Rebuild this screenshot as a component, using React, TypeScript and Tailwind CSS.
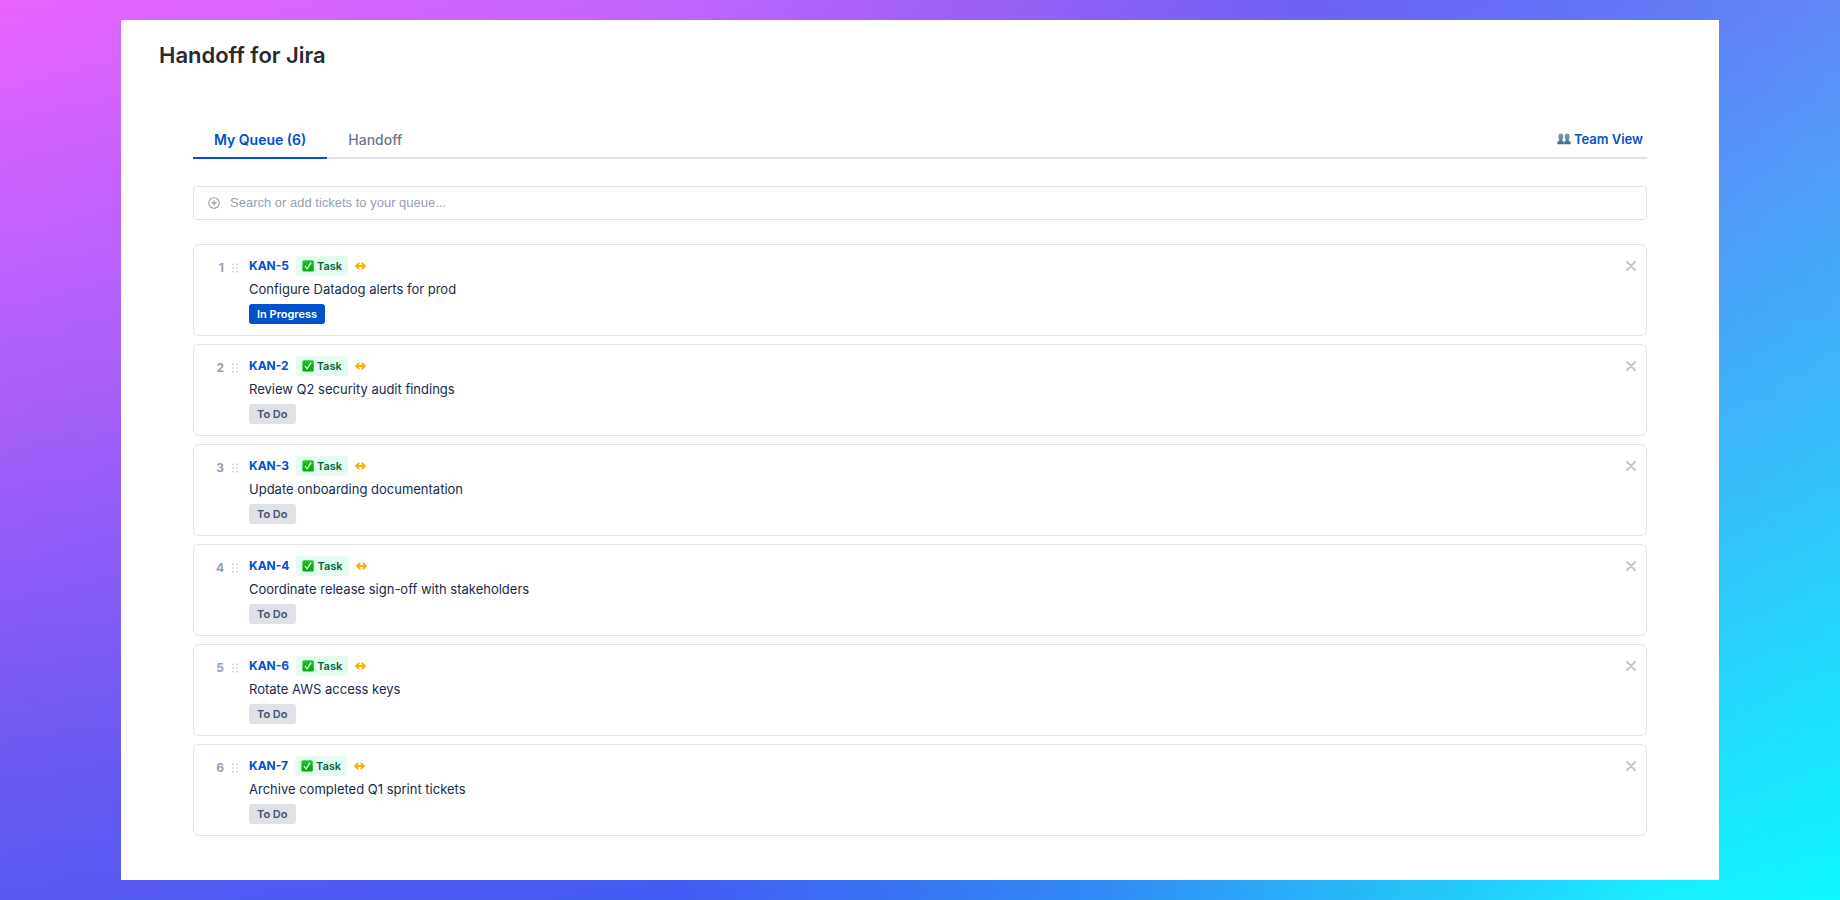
import { useState } from 'react';

type Status = 'In Progress' | 'To Do';

interface Ticket {
  id: string;
  title: string;
  status: Status;
}

const tickets: Ticket[] = [
  { id: 'KAN-5', title: 'Configure Datadog alerts for prod', status: 'In Progress' },
  { id: 'KAN-2', title: 'Review Q2 security audit findings', status: 'To Do' },
  { id: 'KAN-3', title: 'Update onboarding documentation', status: 'To Do' },
  { id: 'KAN-4', title: 'Coordinate release sign-off with stakeholders', status: 'To Do' },
  { id: 'KAN-6', title: 'Rotate AWS access keys', status: 'To Do' },
  { id: 'KAN-7', title: 'Archive completed Q1 sprint tickets', status: 'To Do' },
];

const statusStyles: Record<Status, string> = {
  'In Progress': 'bg-[#0052cc] text-white',
  'To Do': 'bg-[#dfe1e6] text-[#42526e]',
};

function TeamIcon() {
  return (
    <svg width="14" height="12" viewBox="0 0 14 12" aria-hidden="true">
      <defs>
        <linearGradient id="bust" x1="0" y1="0" x2="0" y2="1">
          <stop offset="0" stopColor="#86a3b3" />
          <stop offset="1" stopColor="#436a8c" />
        </linearGradient>
      </defs>
      <g fill="url(#bust)">
        <path d="M3.8.5C5.5.5 6.4 1.8 6.3 3.6 6.2 5 5.8 5.9 5.2 6.5c-.1.9.1 1.3 1 1.7.5.3.6.8.6 1.4v1.6H.3V9.7c0-.8.2-1.2.8-1.5 1-.4 1.3-.8 1.2-1.7C1.7 5.9 1.4 5 1.3 3.6 1.2 1.8 2.1.5 3.8.5Z" />
        <path d="M10.2.5c1.7 0 2.6 1.3 2.5 3.1-.1 1.4-.4 2.3-1 2.9-.1.9.2 1.3 1.2 1.7.6.3.8.7.8 1.5v1.5H7.2V9.6c0-.6.1-1.1.6-1.4.9-.4 1.1-.8 1-1.7-.6-.6-1-1.5-1.1-2.9C7.6 1.8 8.5.5 10.2.5Z" />
      </g>
    </svg>
  );
}

function CheckIcon() {
  return (
    <svg width="12" height="12" viewBox="0 0 12 12" aria-hidden="true">
      <defs>
        <linearGradient id="check" x1="0" y1="0" x2="0" y2="1">
          <stop offset="0" stopColor="#2cc13c" />
          <stop offset=".5" stopColor="#06b80c" />
          <stop offset="1" stopColor="#04a80a" />
        </linearGradient>
      </defs>
      <rect x=".4" y=".2" width="11.4" height="11.4" rx="1.6" fill="url(#check)" />
      <path d="M3.2 6.4 5.1 9 8.9 2.9" fill="none" stroke="#fff" strokeWidth="1.2" strokeLinecap="round" strokeLinejoin="round" />
    </svg>
  );
}

function HandoffIcon() {
  return (
    <svg width="12" height="10" viewBox="0 0 12 10" fill="none" stroke="#ffab00" strokeWidth="1.8" strokeLinecap="round" strokeLinejoin="round" role="img" aria-label="Handoff">
      <path d="M2 5h7M3.7 2.4 1.1 5l2.6 2.600M7.300 2.400 9.900 5 7.300 7.600" />
    </svg>
  );
}

function GripIcon() {
  return (
    <svg width="6" height="10" viewBox="0 0 6 10" fill="#b3bac5" aria-hidden="true">
      {[1.2, 5, 8.8].map((y) => (
        <g key={y}>
          <circle cx="1" cy={y} r=".8" />
          <circle cx="5" cy={y} r=".8" />
        </g>
      ))}
    </svg>
  );
}

function TicketCard({ ticket, position }: { ticket: Ticket; position: number }) {
  return (
    <li className="flex items-start rounded-md border border-[#e1e3e8] bg-white py-[11px] pr-[7px] pl-[19px]">
      <span className="mt-0.5 w-[11px] text-right text-xs leading-5 font-bold text-[#97a0af]">{position}</span>
      <button type="button" aria-label={`Reorder ${ticket.id}`} className="mr-[11px] ml-2 flex h-6 w-[6px] items-center justify-center">
        <GripIcon />
      </button>
      <div className="min-w-0 flex-1">
        <div className="flex h-5 items-center">
          <a href={`#${ticket.id}`} className="mr-[7px] text-xs leading-5 font-bold text-[#0052cc]">
            {ticket.id}
          </a>
          <span className="flex h-5 items-center gap-[3px] rounded-[3px] bg-[#e3fcef] px-[6px] text-[11px] font-semibold text-[#006644]">
            <CheckIcon />
            Task
          </span>
          <span className="ml-[7px]">
            <HandoffIcon />
          </span>
        </div>
        <p className="mt-[3px] text-[13px] leading-5 text-[#172b4d]">{ticket.title}</p>
        <span className={`mt-[5px] flex h-5 w-fit items-center rounded-[3px] px-2 text-[11px] font-semibold ${statusStyles[ticket.status]}`}>
          {ticket.status}
        </span>
      </div>
      <button type="button" aria-label={`Remove ${ticket.id}`} className="flex h-5 w-4 items-center justify-center">
        <svg width="10" height="10" viewBox="0 0 10 10" fill="none" stroke="#c1c7d0" strokeWidth="1.8" strokeLinecap="round">
          <path d="m1 1 8 8M9 1 1 9" />
        </svg>
      </button>
    </li>
  );
}

export default function App() {
  const [tab, setTab] = useState<'queue' | 'handoff'>('queue');
  const active = 'border-[#0052cc] font-semibold text-[#0052cc]';
  const idle = 'border-transparent font-medium text-[#6b778c]';

  return (
    <div className="relative isolate min-h-screen px-[121px] py-5 font-['Inter',sans-serif]">
      <div className="absolute inset-0 -z-10 bg-[linear-gradient(90deg,#5858f1_0%,#405cf2_37%,#308cf5_60%,#24c8fa_78%,#1aeefe_90%,#0cf8ff_100%)]" />
      <div className="absolute inset-0 -z-10 bg-[linear-gradient(90deg,#ea64ff_0%,#c566fc_35%,#a060f7_51%,#7060f2_71%,#6472f6_86%,#6088f5_100%)] [mask-image:linear-gradient(to_bottom,black,transparent)]" />

      <main className="min-h-[860px] bg-white pb-10">
        <h1 className="px-[38px] pt-5 text-[22px] leading-[30px] font-semibold text-[#292a2e]">Handoff for Jira</h1>

        <div className="px-[72px] pt-[52px]">
          <nav className="flex items-end border-b-2 border-[#e1e3e8]">
            <button type="button" onClick={() => setTab('queue')} className={`-mb-[2px] border-b-2 px-[21px] pt-2 pb-[7px] text-sm leading-5 ${tab === 'queue' ? active : idle}`}>
              My Queue (6)
            </button>
            <button type="button" onClick={() => setTab('handoff')} className={`-mb-[2px] border-b-2 px-[21px] pt-2 pb-[7px] text-sm leading-5 ${tab === 'handoff' ? active : idle}`}>
              Handoff
            </button>
            <a href="#team" className="mr-1 mb-2 ml-auto flex items-center gap-[3px] text-[13px] leading-5 font-semibold text-[#0052cc]">
              <TeamIcon />
              Team View
            </a>
          </nav>

          <label className="mt-[27px] flex h-[34px] items-center gap-[10px] rounded border border-[#e1e3e8] px-[14px]">
            <svg width="12" height="12" viewBox="0 0 12 12" fill="none" stroke="#97a0af" strokeLinecap="round" aria-hidden="true">
              <circle cx="6" cy="6" r="5.3" strokeWidth="1.1" />
              <path d="M6 4v4M4 6h4" strokeWidth="1.3" />
            </svg>
            <input
              type="text"
              aria-label="Search or add tickets"
              placeholder="Search or add tickets to your queue..."
              className="flex-1 bg-transparent font-['Liberation_Sans',Arial,sans-serif] text-[13px] leading-5 text-[#172b4d] outline-none placeholder:text-[#97a0af]"
            />
          </label>

          <ul className="mt-6 flex flex-col gap-2">
            {tickets.map((ticket, i) => (
              <TicketCard key={ticket.id} ticket={ticket} position={i + 1} />
            ))}
          </ul>
        </div>
      </main>
    </div>
  );
}
